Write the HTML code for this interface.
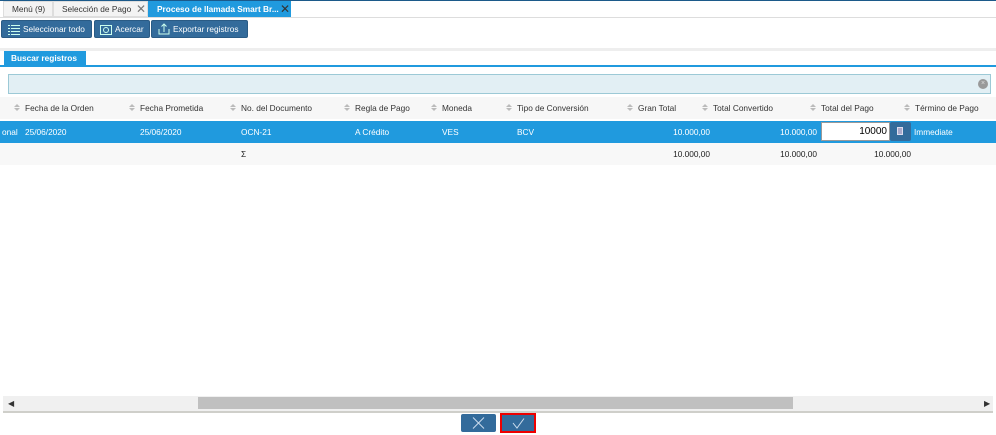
<!DOCTYPE html>
<html><head><style>
*{margin:0;padding:0;box-sizing:border-box}
body{width:996px;height:435px;position:relative;background:#fff;font-family:"Liberation Sans",sans-serif;font-size:8.3px;color:#333;overflow:hidden}
.a{position:absolute;white-space:nowrap}
.tab{position:absolute;top:1px;height:16px;line-height:15px;background:#f3f3f3;border:1px solid #ddd;padding-left:8px;font-size:8.3px;color:#333}
.btn{position:absolute;top:20px;height:18px;background:#336b9b;border-radius:2px;color:#fff;line-height:17px;font-size:8.3px;border:1px solid #2a5b85}
.h{position:absolute;top:103px;color:#333}
.s{position:absolute;top:104px;width:7px;height:8px}
.s:before{content:"";position:absolute;left:0;top:0;border:3px solid transparent;border-bottom:3px solid #bbb;border-top:0}
.s:after{content:"";position:absolute;left:0;top:4px;border:3px solid transparent;border-top:3px solid #bbb;border-bottom:0}
.r{position:absolute;top:127px;color:#fff}
.sm{position:absolute;top:149px;color:#222}
</style></head><body>
<div class="a" style="left:0;top:0;width:996px;height:1px;background:#1c5a8a"></div>
<div class="a" style="left:0;top:17px;width:996px;height:1px;background:#ddd"></div>
<div class="tab" style="left:3px;width:50px">Menú (9)</div>
<div class="tab" style="left:53px;width:95px">Selección de Pago<span style="position:absolute;left:82px;top:0;font-size:12px;color:#777">✕</span></div>
<div class="tab" style="left:148px;width:143px;background:#209ade;color:#fff;border-color:#209ade;font-weight:bold">Proceso de llamada Smart Br...<span style="position:absolute;left:131px;top:0;font-size:12px;color:#333;font-weight:normal">✕</span></div>
<div class="btn" style="left:1px;width:91px;padding-left:21px"><svg class="a" style="left:6px;top:3px" width="12" height="11"><g stroke="#cfe" stroke-width="1"><path d="M0 1.5h2M3 1.5h9M0 4.5h2M3 4.5h9M0 7.5h2M3 7.5h9M0 10.5h2M3 10.5h9"/></g></svg>Seleccionar todo</div>
<div class="btn" style="left:94px;width:56px;padding-left:20px"><svg class="a" style="left:5px;top:4px" width="12" height="10"><rect x="0.5" y="0.5" width="11" height="9" fill="none" stroke="#cfe"/><circle cx="6" cy="5" r="2.5" fill="none" stroke="#cfe"/></svg>Acercar</div>
<div class="btn" style="left:151px;width:97px;padding-left:21px"><svg class="a" style="left:6px;top:2px" width="12" height="12"><path d="M1 6v5h10V6M6 9V1M3.5 3.5L6 1l2.5 2.5" fill="none" stroke="#cfe"/></svg>Exportar registros</div>
<div class="a" style="left:0;top:48px;width:996px;height:3px;background:#eee"></div>
<div class="a" style="left:4px;top:51px;width:82px;height:15px;background:#209ade;color:#fff;font-weight:bold;line-height:14px;padding-left:7px">Buscar registros</div>
<div class="a" style="left:0;top:65px;width:996px;height:2px;background:#209ade"></div>
<div class="a" style="left:8px;top:74px;width:983px;height:20px;background:#e2eff4;border:1px solid #9cc9d6"></div>
<div class="a" style="left:978px;top:79px;width:10px;height:10px;border-radius:50%;background:#999;color:#ddd;font-size:7px;text-align:center;line-height:10px">×</div>
<div class="a" style="left:0;top:97px;width:996px;height:22px;background:#f7f7f7"></div>
<div class="s" style="left:14px"></div><div class="h" style="left:25px">Fecha de la Orden</div>
<div class="s" style="left:129px"></div><div class="h" style="left:140px">Fecha Prometida</div>
<div class="s" style="left:230px"></div><div class="h" style="left:241px">No. del Documento</div>
<div class="s" style="left:344px"></div><div class="h" style="left:355px">Regla de Pago</div>
<div class="s" style="left:431px"></div><div class="h" style="left:442px">Moneda</div>
<div class="s" style="left:506px"></div><div class="h" style="left:517px">Tipo de Conversión</div>
<div class="s" style="left:627px"></div><div class="h" style="left:638px">Gran Total</div>
<div class="s" style="left:702px"></div><div class="h" style="left:713px">Total Convertido</div>
<div class="s" style="left:810px"></div><div class="h" style="left:821px">Total del Pago</div>
<div class="s" style="left:904px"></div><div class="h" style="left:915px">Término de Pago</div>
<div class="a" style="left:0;top:121px;width:996px;height:22px;background:#209ade"></div>
<div class="r" style="left:2px">onal</div><div class="r" style="left:25px">25/06/2020</div><div class="r" style="left:140px">25/06/2020</div><div class="r" style="left:241px">OCN-21</div><div class="r" style="left:355px">A Crédito</div><div class="r" style="left:442px">VES</div><div class="r" style="left:517px">BCV</div>
<div class="r" style="left:600px;width:110px;text-align:right">10.000,00</div>
<div class="r" style="left:700px;width:117px;text-align:right">10.000,00</div>
<div class="a" style="left:821px;top:122px;width:69px;height:19px;background:#fff;border:1px solid #999;text-align:right;padding-right:2px;line-height:17px;font-size:10px;color:#000">10000</div>
<div class="a" style="left:890px;top:122px;width:21px;height:19px;background:#336b9b;border-radius:2px"><div class="a" style="left:7px;top:5px;width:6px;height:8px;background:#aac;border:1px solid #dde"></div></div>
<div class="r" style="left:914px">Immediate</div>
<div class="a" style="left:0;top:143px;width:996px;height:22px;background:#f8f8f8"></div>
<div class="sm" style="left:241px">Σ</div>
<div class="sm" style="left:600px;width:110px;text-align:right">10.000,00</div>
<div class="sm" style="left:700px;width:117px;text-align:right">10.000,00</div>
<div class="sm" style="left:800px;width:111px;text-align:right">10.000,00</div>
<div class="a" style="left:3px;top:396px;width:990px;height:15px;background:#f0f0f0"></div>
<div class="a" style="left:198px;top:397px;width:595px;height:12px;background:#c0c0c0"></div>
<div class="a" style="left:8px;top:399px;color:#333;font-size:8px">◀</div>
<div class="a" style="left:984px;top:399px;color:#333;font-size:8px">▶</div>
<div class="a" style="left:3px;top:411px;width:990px;height:2px;background:#cfcfca"></div>
<div class="a" style="left:461px;top:414px;width:35px;height:18px;background:#336b9b;border-radius:2px"><svg class="a" style="left:11px;top:3px" width="13" height="12"><path d="M1 0.5l11 11M12 0.5L1 11.5" stroke="#cde" stroke-width="1"/></svg></div>
<div class="a" style="left:500px;top:413px;width:36px;height:20px;background:#336b9b;border:2px solid #e00"><svg class="a" style="left:10px;top:3px" width="13" height="11"><path d="M1 5l4 5L12 0.5" fill="none" stroke="#cde" stroke-width="1"/></svg></div>
</body></html>
